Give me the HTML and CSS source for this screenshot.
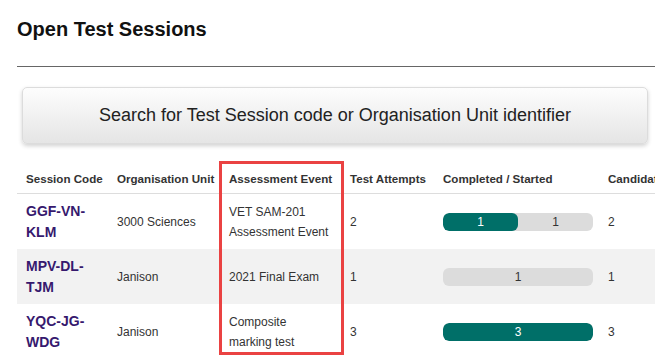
FILE: index.html
```html
<!DOCTYPE html>
<html lang="en">
<head>
    <meta charset="UTF-8">
    <meta name="viewport" content="width=device-width, initial-scale=1.0">
    <title>Open Test Sessions</title>
    <link rel="stylesheet" href="styles.css">
</head>
<body>
    <div class="page">
        <h1>Open Test Sessions</h1>
        <hr class="divider">

        <button class="search-btn" type="button">Search for Test Session code or Organisation Unit identifier</button>

        <div class="table-wrap">
            <table class="sessions">
                <colgroup>
                    <col class="c-code">
                    <col class="c-unit">
                    <col class="c-event">
                    <col class="c-attempts">
                    <col class="c-progress">
                    <col class="c-cand">
                </colgroup>
                <thead>
                    <tr>
                        <th>Session Code</th>
                        <th>Organisation Unit</th>
                        <th>Assessment Event</th>
                        <th>Test Attempts</th>
                        <th>Completed / Started</th>
                        <th>Candidates</th>
                    </tr>
                </thead>
                <tbody>
                    <tr>
                        <td class="code">GGF-VN-<br>KLM</td>
                        <td>3000 Sciences</td>
                        <td>VET SAM-201<br>Assessment Event</td>
                        <td>2</td>
                        <td>
                            <div class="bar">
                                <span class="fill" style="width: 50%">1</span>
                                <span class="rest">1</span>
                            </div>
                        </td>
                        <td>2</td>
                    </tr>
                    <tr>
                        <td class="code">MPV-DL-<br>TJM</td>
                        <td>Janison</td>
                        <td>2021 Final Exam</td>
                        <td>1</td>
                        <td>
                            <div class="bar">
                                <span class="rest">1</span>
                            </div>
                        </td>
                        <td>1</td>
                    </tr>
                    <tr>
                        <td class="code">YQC-JG-<br>WDG</td>
                        <td>Janison</td>
                        <td>Composite<br>marking test</td>
                        <td>3</td>
                        <td>
                            <div class="bar">
                                <span class="fill" style="width: 100%">3</span>
                            </div>
                        </td>
                        <td>3</td>
                    </tr>
                </tbody>
            </table>
            <div class="highlight"></div>
        </div>
    </div>
</body>
</html>
```

FILE: styles.css
```css
:root {
    --text-color: #333;
    --code-color: #36196e;
    --teal: #006f68;
    --track: #dcdcdc;
    --stripe: #f2f2f2;
    --mark: #ea4242;
}

* {
    margin: 0;
    padding: 0;
    box-sizing: border-box;
}

body {
    font-family: 'Liberation Sans', Arial, sans-serif;
    color: var(--text-color);
    background: white;
    overflow: hidden;
}

.page {
    padding-left: 17px;
    width: 720px;
}

h1 {
    font-size: 20px;
    font-weight: bold;
    color: #111;
    margin-top: 18px;
    line-height: 23px;
}

.divider {
    border: none;
    border-top: 1px solid #666;
    margin-top: 25px;
}

.search-btn {
    display: block;
    margin: 20px 0 0 5px;
    width: 626px;
    height: 57px;
    font-family: inherit;
    font-size: 18px;
    color: #222;
    background: linear-gradient(#fdfdfd, #e5e5e5);
    border: 1px solid #dcdcdc;
    border-radius: 5px;
    box-shadow: 0 2px 4px rgba(0,0,0,0.18);
    cursor: pointer;
}

.table-wrap {
    position: relative;
    margin-top: 17px;
}

.sessions {
    width: 700px;
    table-layout: fixed;
    border-collapse: collapse;
    font-size: 12px;
}

.c-code { width: 91px; }
.c-unit { width: 112px; }
.c-event { width: 121px; }
.c-attempts { width: 93px; }
.c-progress { width: 165px; }

.sessions th {
    text-align: left;
    font-size: 11.6px;
    font-weight: bold;
    line-height: 20px;
    padding: 8px 9px 4px;
    border-bottom: 1px solid #ddd;
    white-space: nowrap;
}

.sessions td {
    line-height: 20px;
    padding: 7px 9px 6px;
    vertical-align: middle;
}

.sessions tbody tr:nth-child(even) {
    background: var(--stripe);
}

.sessions td.code {
    font-size: 14px;
    font-weight: bold;
    line-height: 21px;
    color: var(--code-color);
}

.bar {
    display: flex;
    width: 150px;
    height: 18px;
    line-height: 18px;
    background: var(--track);
    border-radius: 6px;
    overflow: hidden;
}

.fill {
    background: var(--teal);
    color: white;
    text-align: center;
    border-radius: 6px;
}

.rest {
    flex: 1;
    text-align: center;
}

.highlight {
    position: absolute;
    left: 202px;
    top: 0;
    width: 125px;
    height: 194px;
    border: 3px solid var(--mark);
    pointer-events: none;
}
```
